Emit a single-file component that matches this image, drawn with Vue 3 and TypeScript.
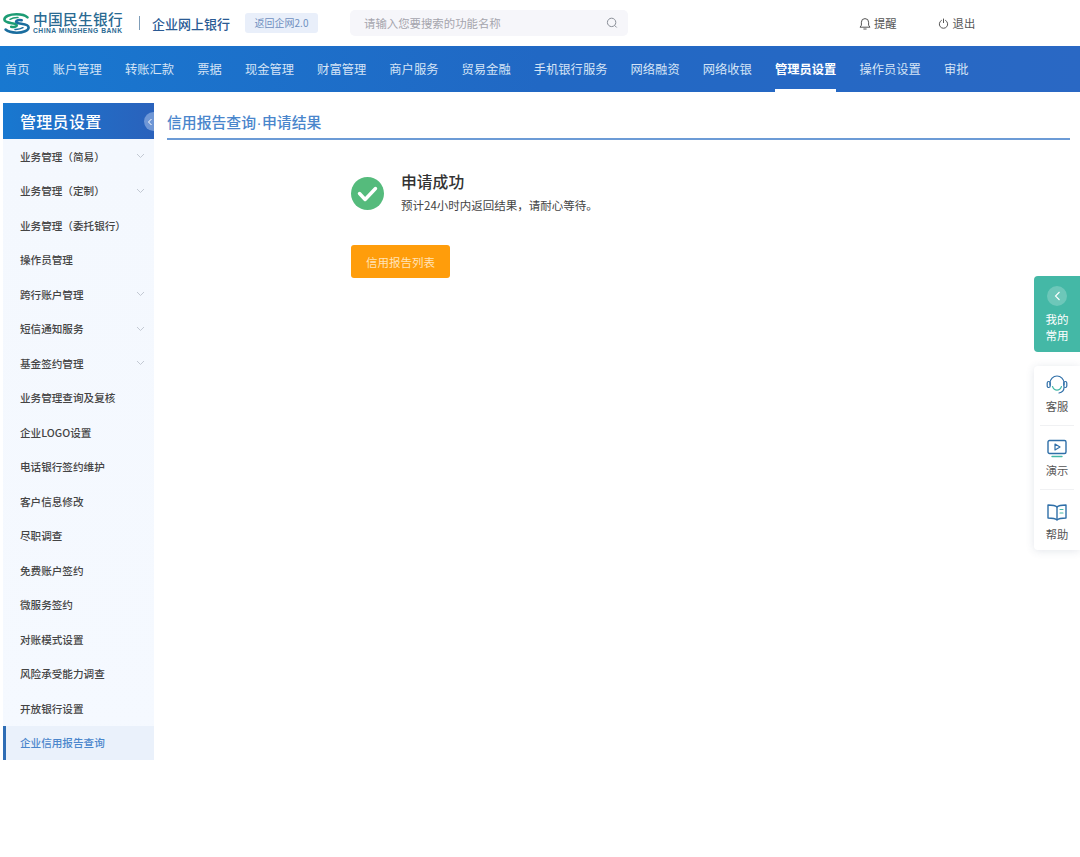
<script setup lang="ts">
const navItems: string[] = ['首页','账户管理','转账汇款','票据','现金管理','财富管理','商户服务','贸易金融','手机银行服务','网络融资','网络收银','管理员设置','操作员设置','审批']
const activeNav = '管理员设置'
interface SideItem { label: string; arrow?: boolean; active?: boolean }
const sideItems: SideItem[] = [
  { label: '业务管理（简易）', arrow: true },
  { label: '业务管理（定制）', arrow: true },
  { label: '业务管理（委托银行）' },
  { label: '操作员管理' },
  { label: '跨行账户管理', arrow: true },
  { label: '短信通知服务', arrow: true },
  { label: '基金签约管理', arrow: true },
  { label: '业务管理查询及复核' },
  { label: '企业LOGO设置' },
  { label: '电话银行签约维护' },
  { label: '客户信息修改' },
  { label: '尽职调查' },
  { label: '免费账户签约' },
  { label: '微服务签约' },
  { label: '对账模式设置' },
  { label: '风险承受能力调查' },
  { label: '开放银行设置' },
  { label: '企业信用报告查询', active: true }
]
</script>

<template>
  <div class="page">
    <header class="top">
      <svg class="logo" width="27" height="21" viewBox="0 0 27 21" fill="none">
        <path d="M24.500 4.400C22 2 17.500 1.300 13.500 1.300 6.500 1.300 1.400 3.400 1.400 6.600c0 4.600 12.400 2.700 12.400 5.600 0 1.600-3 2.200-5.600 1.600" stroke="#1c9c74" stroke-width="2.600" stroke-linecap="round"/>
        <path d="M2.600 16.600c2.500 2.200 6.500 3.100 11 3.100 6.500 0 12-2.100 12-5.300 0-4.600-12.500-2.700-12.500-5.600 0-1.600 3-2.200 5.600-1.600" stroke="#1a6d9e" stroke-width="2.600" stroke-linecap="round"/>
        <path d="M7 6.300c2.200-1.300 4.800-1.800 8-1.700" stroke="#1c9c74" stroke-width="1.500" stroke-linecap="round"/>
        <path d="M20 14.700c-2.200 1.300-4.800 1.800-8 1.700" stroke="#1a6d9e" stroke-width="1.500" stroke-linecap="round"/>
      </svg>
      <div class="brand">
        <div class="brand-cn">中国民生银行</div>
        <div class="brand-en">CHINA MINSHENG BANK</div>
      </div>
      <span class="sep"></span>
      <span class="product">企业网上银行</span>
      <span class="back-tag">返回企网2.0</span>
      <div class="search">
        <span>请输入您要搜索的功能名称</span>
        <svg width="12" height="12" viewBox="0 0 12 12" fill="none" stroke="#8a8f98" stroke-width="1">
          <circle cx="5.600" cy="5.400" r="4.200"/>
          <path d="M8.800 8.600l1.600 1.600" stroke-linecap="round"/>
        </svg>
      </div>
      <div class="tool tool-bell">
        <svg width="12" height="13" viewBox="0 0 12 13" fill="none" stroke="#555" stroke-width="1">
          <path d="M1 10.200h10L9.600 8.200V5.200a3.600 3.600 0 0 0-7.200 0v3z" stroke-linejoin="round"/>
          <path d="M4.800 12h2.400" stroke-linecap="round"/>
        </svg>
        <span>提醒</span>
      </div>
      <div class="tool tool-exit">
        <svg width="11" height="11" viewBox="0 0 11 11" fill="none" stroke="#555" stroke-width="1">
          <path d="M3.400 2.400a4.200 4.200 0 1 0 4.200 0" stroke-linecap="round"/>
          <path d="M5.500 1v3.600" stroke-linecap="round"/>
        </svg>
        <span>退出</span>
      </div>
    </header>

    <nav class="nav">
      <a v-for="item in navItems" :key="item" class="nav-item" :class="{ current: item === activeNav }">{{ item }}</a>
    </nav>

    <div class="main">
      <aside class="side">
        <div class="side-title">
          <span>管理员设置</span>
          <i class="collapse">
            <svg width="6" height="8" viewBox="0 0 6 8" fill="none" stroke="#fff" stroke-width="1"><path d="M4.500 1L1.500 4l3 3"/></svg>
          </i>
        </div>
        <ul class="side-list">
          <li v-for="s in sideItems" :key="s.label" class="side-item" :class="{ active: s.active }">
            <span>{{ s.label }}</span>
            <svg v-if="s.arrow" width="9" height="6" viewBox="0 0 9 6" fill="none" stroke="#c3c9d3" stroke-width="1"><path d="M1 1l3.500 3.500L8 1"/></svg>
          </li>
        </ul>
      </aside>

      <section class="content">
        <h2 class="crumb">信用报告查询<span class="dot">·</span>申请结果</h2>
        <div class="result">
          <svg class="ok" width="33" height="33" viewBox="0 0 33 33">
            <circle cx="16.500" cy="16.500" r="16.500" fill="#55bb7c"/>
            <path d="M8.500 16.500l5.600 6L24.500 11.500" fill="none" stroke="#fff" stroke-width="3.400" stroke-linecap="round" stroke-linejoin="round"/>
          </svg>
          <div class="result-text">
            <div class="result-title">申请成功</div>
            <div class="result-sub">预计24小时内返回结果，请耐心等待。</div>
          </div>
        </div>
        <button class="primary">信用报告列表</button>
      </section>
    </div>

    <aside class="float">
      <div class="fav">
        <i class="fav-arrow">
          <svg width="7" height="10" viewBox="0 0 7 10" fill="none" stroke="#fff" stroke-width="1.100"><path d="M5.500 1L1.500 5l4 4"/></svg>
        </i>
        <span>我的<br />常用</span>
      </div>
      <div class="help">
        <div class="help-item">
          <svg width="22" height="20" viewBox="0 0 22 20" fill="none" stroke="#2f6fa8" stroke-width="1.200" stroke-linecap="round">
            <path d="M4 10V8a7 7 0 0 1 14 0v2"/>
            <rect x="1.200" y="6.500" width="3" height="6" rx="1.500"/>
            <rect x="17.800" y="6.500" width="3" height="6" rx="1.500"/>
            <path d="M6.500 11.500c1 2.600 2.600 3.600 4.500 3.600s3.500-1 4.500-3.600" stroke="#44b8a6"/>
            <path d="M18 12.500c0 3-2 5-5 5.500"/>
          </svg>
          <span>客服</span>
        </div>
        <div class="help-item">
          <svg width="20" height="19" viewBox="0 0 20 19" fill="none" stroke="#2f6fa8" stroke-width="1.400">
            <rect x="1" y="1" width="18" height="13" rx="1.500"/>
            <path d="M8 4.500l5 3-5 3z" stroke-linejoin="round" stroke-width="1.200"/>
            <path d="M5 17h10" stroke="#44b8a6" stroke-linecap="round"/>
          </svg>
          <span>演示</span>
        </div>
        <div class="help-item">
          <svg width="20" height="19" viewBox="0 0 20 19" fill="none" stroke="#2f6fa8" stroke-width="1.400" stroke-linejoin="round">
            <path d="M10 3.500C8.500 2 6 1.500 1 1.500v13c5 0 7.500.5 9 2 1.500-1.500 4-2 9-2v-13c-5 0-7.500.5-9 2z"/>
            <path d="M10 3.500v13"/>
            <path d="M13 6h3M13 9.500h3" stroke="#44b8a6" stroke-width="1.100" stroke-linecap="round"/>
          </svg>
          <span>帮助</span>
        </div>
      </div>
    </aside>
  </div>
</template>

<style>
html, body { margin: 0; background: #fff; }
</style>

<style scoped>
.page {
  position: relative;
  width: 1080px;
  height: 857px;
  overflow: hidden;
  background: #fff;
  font-family: "Noto Sans CJK SC", "Noto Sans", sans-serif;
  color: #444;
}
.top {
  height: 46px;
  display: flex;
  align-items: center;
  padding-left: 3px;
  box-sizing: border-box;
}
.logo { flex: none; margin-right: 3px; }
.brand { width: 92px; margin-right: 14px; }
.brand-cn { font-size: 14.700px; line-height: 14px; color: #2a6a92; letter-spacing: .3px; white-space: nowrap; font-weight: 500; }
.brand-en { font: bold 6.700px/8px "Liberation Sans", sans-serif; color: #2a6a92; letter-spacing: .5px; white-space: nowrap; margin-top: 1px; }
.sep { width: 1px; height: 14px; background: #7f9db8; margin-right: 12px; }
.product { font-size: 13px; color: #2a5a94; width: 93px; white-space: nowrap; font-weight: 500; }
.back-tag {
  width: 73px;
  height: 20px;
  line-height: 20px;
  text-align: center;
  background: #e9effa;
  color: #6f90c0;
  font-size: 10px;
  border-radius: 3px;
  margin-right: 32px;
}
.search {
  width: 278px;
  height: 26px;
  box-sizing: border-box;
  padding: 0 10px 0 14px;
  background: #f6f6fa;
  border-radius: 5px;
  display: flex;
  align-items: center;
  justify-content: space-between;
  color: #a5a5ad;
  font-size: 11.400px;
}
.tool { display: flex; align-items: center; gap: 3px; font-size: 11.300px; color: #555; }
.tool-bell { margin-left: 231px; }
.tool-exit { margin-left: 41px; gap: 4px; }

.nav {
  height: 46px;
  display: flex;
  gap: 23.160px;
  padding-left: 5px;
  background: linear-gradient(90deg, #1878d0 0%, #2168c4 50%, #2a68c4 100%);
}
.nav-item {
  font-size: 12.280px;
  line-height: 46px;
  color: #d5e4f6;
  white-space: nowrap;
  position: relative;
}
.nav-item.current { color: #fff; font-weight: 700; }
.nav-item.current::after {
  content: "";
  position: absolute;
  left: 0;
  right: 0;
  bottom: 0;
  height: 3px;
  background: #fff;
}

.main { display: flex; padding: 11px 10px 0 3px; }
.side { width: 151px; flex: none; }
.side-title {
  position: relative;
  height: 36px;
  overflow: hidden;
  background: linear-gradient(90deg, #1878d0, #2a62bc);
  color: #fff;
  display: flex;
  align-items: center;
  padding-left: 17px;
  font-size: 16px;
  letter-spacing: .3px;
  font-weight: 500;
}
.collapse {
  position: absolute;
  right: -9px;
  top: 9px;
  width: 19px;
  height: 19px;
  border-radius: 50%;
  background: #6f97d6;
  display: flex;
  align-items: center;
  padding-left: 3px;
  box-sizing: border-box;
}
.side-list {
  margin: 0;
  padding: 0;
  list-style: none;
  background: linear-gradient(180deg, #f4f8fe, #f5f9ff);
}
.side-item {
  height: 34.500px;
  display: flex;
  align-items: center;
  justify-content: space-between;
  box-sizing: border-box;
  padding: 0 9px 0 17px;
  font-size: 10.600px;
  color: #444;
  font-weight: 500;
  white-space: nowrap;
}
.side-item.active {
  background: #eaf1fb;
  color: #4a86cc;
  box-shadow: inset 3px 0 0 #2e6db5;
}

.content { flex: 1; margin-left: 13px; }
.crumb {
  margin: 0;
  height: 35px;
  line-height: 38px;
  font-size: 14.850px;
  font-weight: 500;
  color: #4a86cc;
  border-bottom: 2px solid #6c9bd6;
  box-sizing: content-box;
}
.dot { font-family: "Liberation Sans", sans-serif; margin: 0 .5px; }
.result {
  display: flex;
  align-items: flex-start;
  gap: 17px;
  height: 33px;
  margin: 37px 0 0 184px;
}
.ok { flex: none; }
.result-text { margin-top: -6px; }
.result-title { font-size: 15.800px; line-height: 22px; font-weight: 500; color: #333; }
.result-sub { font-size: 11.500px; line-height: 22px; margin-top: 1px; color: #444; white-space: nowrap; }
.primary {
  display: block;
  margin: 35px 0 0 184px;
  width: 99px;
  height: 33px;
  border: 0;
  border-radius: 3px;
  background: #ff9d0b;
  color: #ffe3b8;
  font: 11.500px "Noto Sans CJK SC", sans-serif;
  padding: 0;
}

.float {
  position: absolute;
  right: 0;
  top: 276px;
  width: 46px;
}
.fav {
  height: 76px;
  background: #44b8a6;
  border-radius: 4px 0 0 4px;
  color: #fff;
  display: flex;
  flex-direction: column;
  align-items: center;
  padding-top: 10px;
  box-sizing: border-box;
}
.fav-arrow {
  width: 20px;
  height: 20px;
  border-radius: 50%;
  background: rgba(255, 255, 255, .22);
  display: flex;
  align-items: center;
  justify-content: center;
}
.fav span { font-size: 11.500px; line-height: 16px; text-align: center; margin-top: 5px; }
.help {
  margin-top: 14px;
  height: 184px;
  background: #fff;
  border-radius: 4px 0 0 4px;
  box-shadow: 0 1px 8px rgba(60, 80, 110, .14);
  display: flex;
  flex-direction: column;
}
.help-item {
  flex: none;
  height: 64px;
  box-sizing: border-box;
  padding-top: 9px;
  display: flex;
  flex-direction: column;
  align-items: center;
  font-size: 11.300px;
  line-height: 16px;
  color: #555;
  position: relative;
}
.help-item:last-child { height: 56px; }
.help-item svg { height: 20px; margin-bottom: 3px; }
.help-item + .help-item::before {
  content: "";
  position: absolute;
  top: -5px;
  left: 6px;
  right: 6px;
  height: 1px;
  background: #f0f1f3;
}
</style>
